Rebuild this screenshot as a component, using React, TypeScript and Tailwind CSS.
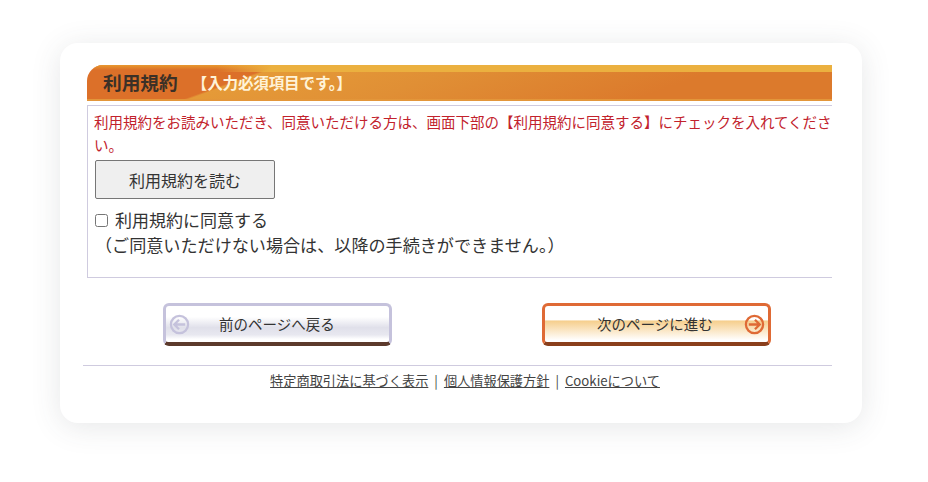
import React from 'react';

const font = '"Noto Sans CJK JP", "Noto Sans", sans-serif';

const ArrowCircle: React.FC<{ dir: 'left' | 'right'; className: string }> = ({ dir, className }) => (
  <svg viewBox="0 0 22 22" className={className} fill="none" stroke="currentColor" strokeWidth="2.4">
    <circle cx="11" cy="11" r="9" />
    {dir === 'left' ? <path d="M17 11H6M10.5 6 5.5 11l5 5" /> : <path d="M5 11h11M11.5 6l5 5-5 5" />}
  </svg>
);

export default function App() {
  return (
    <div className="w-[928px] h-[482px] bg-white pt-[43px] pl-[60px]" style={{ fontFamily: font }}>
      <div className="w-[802px] h-[380px] bg-white rounded-[18px] shadow-[0_4px_30px_rgba(60,70,80,0.13)] pt-[22px] pl-[23px] overflow-hidden">
        <div className="w-[749px] overflow-hidden">
          {/* Heading */}
          <div className="ml-[4px] h-[36px] rounded-tl-[16px] border-b-2 border-[#e3963a] flex items-center pl-[16px] pt-[1px] bg-no-repeat bg-[length:100%_7px,100%_5px,100%_100%] bg-[linear-gradient(90deg,transparent_130px,#ebb03f_185px),linear-gradient(#e8992f,transparent),linear-gradient(160deg,#dc7029_0,#dc7029_65px,#e59a38_67px,#e08f35_130px,#dc7a2c_220px,#dc7a2c_100%)]">
            <span className="text-[18.7px] font-bold text-[#3b3027] leading-none">利用規約</span>
            <span className="ml-[14px] text-[15.6px] font-bold text-[#fff3d8] leading-none tracking-[-0.2px]">【入力必須項目です。】</span>
          </div>

          {/* Terms box */}
          <div className="ml-[4px] mt-[4px] h-[173px] border border-r-0 border-[#cfcbdf] pl-[6px] pt-[4px]">
            <p className="w-[745px] text-[14.5px] leading-[23px] text-[#c2222c]">
              利用規約をお読みいただき、同意いただける方は、画面下部の【利用規約に同意する】にチェックを入れてください。
            </p>
            <button className="mt-[4px] ml-[1px] w-[180px] h-[39px] bg-[#efefef] border border-[#767676] rounded-[2px] text-[16px] text-[#333]">
              利用規約を読む
            </button>
            <label className="mt-[9px] flex items-center text-[17px] leading-[24px] text-[#333]">
              <input type="checkbox" className="ml-[1px] mr-[7px] w-[13px] h-[13px]" />
              利用規約に同意する
            </label>
            <p className="ml-[1px] text-[17.1px] leading-[26px] text-[#333]">
              （ご同意いただけない場合は、以降の手続きができません。）
            </p>
          </div>

          {/* Buttons */}
          <div className="mt-[25px] flex pl-[80px]">
            <div className="w-[229px] h-[43px] rounded-[6px] border-[3px] border-b-[4px] border-[#c5c2dc] border-b-[#5c3a2c] flex items-center relative text-[14.5px] text-[#333] bg-[linear-gradient(#fff_0,#fff_30%,#e0e0ea_60%,#e8e8f0_80%,#fff_92%)]">
              <ArrowCircle dir="left" className="w-[21px] h-[21px] ml-[3px] text-[#c5c2dc]" />
              <span className="ml-[29px]">前のページへ戻る</span>
            </div>
            <div className="ml-[150px] w-[229px] h-[43px] rounded-[6px] border-[3px] border-b-[4px] border-[#df6a35] border-b-[#8a3f1c] flex items-center relative text-[14.5px] text-[#333] bg-[linear-gradient(#fff_0,#fff_38%,#f6cf8e_42%,#fff_95%)]">
              <span className="ml-[52px]">次のページに進む</span>
              <ArrowCircle dir="right" className="w-[21px] h-[21px] ml-[31px] text-[#df6a35]" />
            </div>
          </div>

          {/* Footer */}
          <div className="mt-[19px] border-t border-[#cfcbdf] pt-[5px] flex justify-center text-[13.2px] leading-[20px] text-[#444] pl-[15px]">
            <a className="underline">特定商取引法に基づく表示</a>
            <span className="mx-[6px]">|</span>
            <a className="underline">個人情報保護方針</a>
            <span className="mx-[6px]">|</span>
            <a className="underline">Cookieについて</a>
          </div>
        </div>
      </div>
    </div>
  );
}
